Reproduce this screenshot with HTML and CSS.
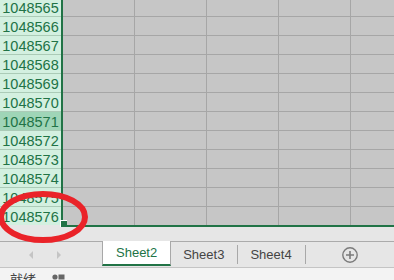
FILE: index.html
```html
<!DOCTYPE html>
<html lang="zh-CN">
<head>
  <meta charset="UTF-8" />
  <meta name="viewport" content="width=device-width, initial-scale=1.0" />
  <title>Sheet2</title>
  <link rel="stylesheet" href="styles.css">
</head>
<body>
  <div class="window">
    <div class="sheet">
      <div class="heads">
        <div class="head">1048565</div>
        <div class="head">1048566</div>
        <div class="head">1048567</div>
        <div class="head">1048568</div>
        <div class="head">1048569</div>
        <div class="head">1048570</div>
        <div class="head current">1048571</div>
        <div class="head">1048572</div>
        <div class="head">1048573</div>
        <div class="head">1048574</div>
        <div class="head">1048575</div>
        <div class="head">1048576</div>
      </div>
      <div class="cells" id="cells"></div>
      <div class="fill-handle"></div>
    </div>

    <div class="gap"></div>

    <div class="tabbar">
      <div class="nav">
        <svg width="8" height="8" viewBox="0 0 8 8"><path d="M6 0 L2 4 L6 8 Z" fill="#c4c4c4"/></svg>
        <svg width="8" height="8" viewBox="0 0 8 8"><path d="M2 0 L6 4 L2 8 Z" fill="#c4c4c4"/></svg>
      </div>
      <div class="tab active">Sheet2</div>
      <div class="tab">Sheet3</div>
      <div class="tab">Sheet4</div>
      <div class="add">
        <svg width="16" height="16" viewBox="0 0 16 16">
          <circle cx="8" cy="8" r="7.2" fill="none" stroke="#7b7b7b" stroke-width="1.4"/>
          <path d="M8 4 V12 M4 8 H12" stroke="#7b7b7b" stroke-width="1.6"/>
        </svg>
      </div>
    </div>

    <div class="status">
      <span class="ready">就绪</span>
      <svg class="macro" width="14" height="8" viewBox="0 0 14 8">
        <circle cx="3" cy="4" r="2.6" fill="#666"/>
        <rect x="6.5" y="1.5" width="6" height="5" fill="#666"/>
      </svg>
    </div>

    <svg class="mark" width="394" height="280" viewBox="0 0 394 280">
      <ellipse cx="43" cy="217" rx="42" ry="23" fill="none" stroke="#ea2329" stroke-width="6"/>
    </svg>
  </div>

  <script>
    const cells = document.getElementById("cells");
    for (let r = 0; r < 12; r++) {
      const row = document.createElement("div");
      row.className = "row";
      for (let c = 0; c < 5; c++) {
        const cell = document.createElement("div");
        cell.className = "cell";
        row.appendChild(cell);
      }
      cells.appendChild(row);
    }
  </script>
</body>
</html>
```

FILE: styles.css
```css
* {
  box-sizing: border-box;
  margin: 0;
  padding: 0;
}

body {
  background-color: #e6e6e6;
  font-family: "Liberation Sans", Arial, sans-serif;
  overflow: hidden;
}

.window {
  width: 394px;
  height: 280px;
  position: relative;
  overflow: hidden;
  display: flex;
  flex-direction: column;
}

.sheet {
  display: flex;
  margin-top: -2px;
  height: 229px;
  flex-shrink: 0;
  position: relative;
}

.heads {
  width: 61px;
  flex-shrink: 0;
  display: flex;
  flex-direction: column;
}

.head {
  height: 19px;
  line-height: 19px;
  padding-top: 1px;
  background-color: #d3f0e0;
  border-bottom: 1px solid #abcbb7;
  color: #217346;
  font-size: 14.5px;
  text-align: center;
  white-space: nowrap;
}

.head:last-child {
  height: 18px;
  border-bottom: none;
}

.head.current {
  background-color: #9fd5b7;
}

.cells {
  flex: 1;
  border-left: 2px solid #217346;
  border-bottom: 2px solid #217346;
  background-color: #c6c6c6;
  overflow: hidden;
}

.row {
  display: flex;
  height: 19px;
  border-bottom: 1px solid #a6a6a6;
}

.row:last-child {
  height: 18px;
  border-bottom: none;
}

.cell {
  width: 72px;
  flex-shrink: 0;
  border-right: 1px solid #a6a6a6;
}

.fill-handle {
  position: absolute;
  left: 60px;
  top: 222px;
  width: 7px;
  height: 7px;
  background-color: #217346;
  border-left: 1px solid #fff;
  border-top: 1px solid #fff;
}

.gap {
  height: 14px;
  flex-shrink: 0;
}

.tabbar {
  height: 27px;
  flex-shrink: 0;
  display: flex;
  align-items: center;
  border-top: 1px solid #ababab;
  border-bottom: 1px solid #c4c4c4;
  font-size: 13px;
  color: #444;
}

.nav {
  width: 102px;
  height: 100%;
  display: flex;
  align-items: center;
  padding-left: 27px;
  gap: 20px;
}

.tab {
  height: 19px;
  line-height: 19px;
  padding: 0 13px 0 12px;
  border-right: 1px solid #a8a8a8;
}

.tab.active {
  align-self: flex-start;
  margin-top: -1px;
  height: 25px;
  line-height: 23px;
  padding: 0 13px;
  background-color: #fff;
  border-left: 1px solid #a8a8a8;
  border-right: 1px solid #a8a8a8;
  border-bottom: 2px solid #217346;
  color: #217346;
}

.add {
  display: flex;
  margin-left: 36px;
  padding-top: 1px;
}

.status {
  flex: 1;
  display: flex;
  align-items: flex-start;
  background-color: #f3f3f3;
  padding: 3px 0 0 10px;
  color: #444;
}

.ready {
  font-family: "Noto Sans CJK SC", sans-serif;
  font-size: 13px;
  line-height: 16px;
}

.macro {
  margin: 2px 0 0 16px;
}

.mark {
  position: absolute;
  left: 0;
  top: 0;
  pointer-events: none;
}
```
